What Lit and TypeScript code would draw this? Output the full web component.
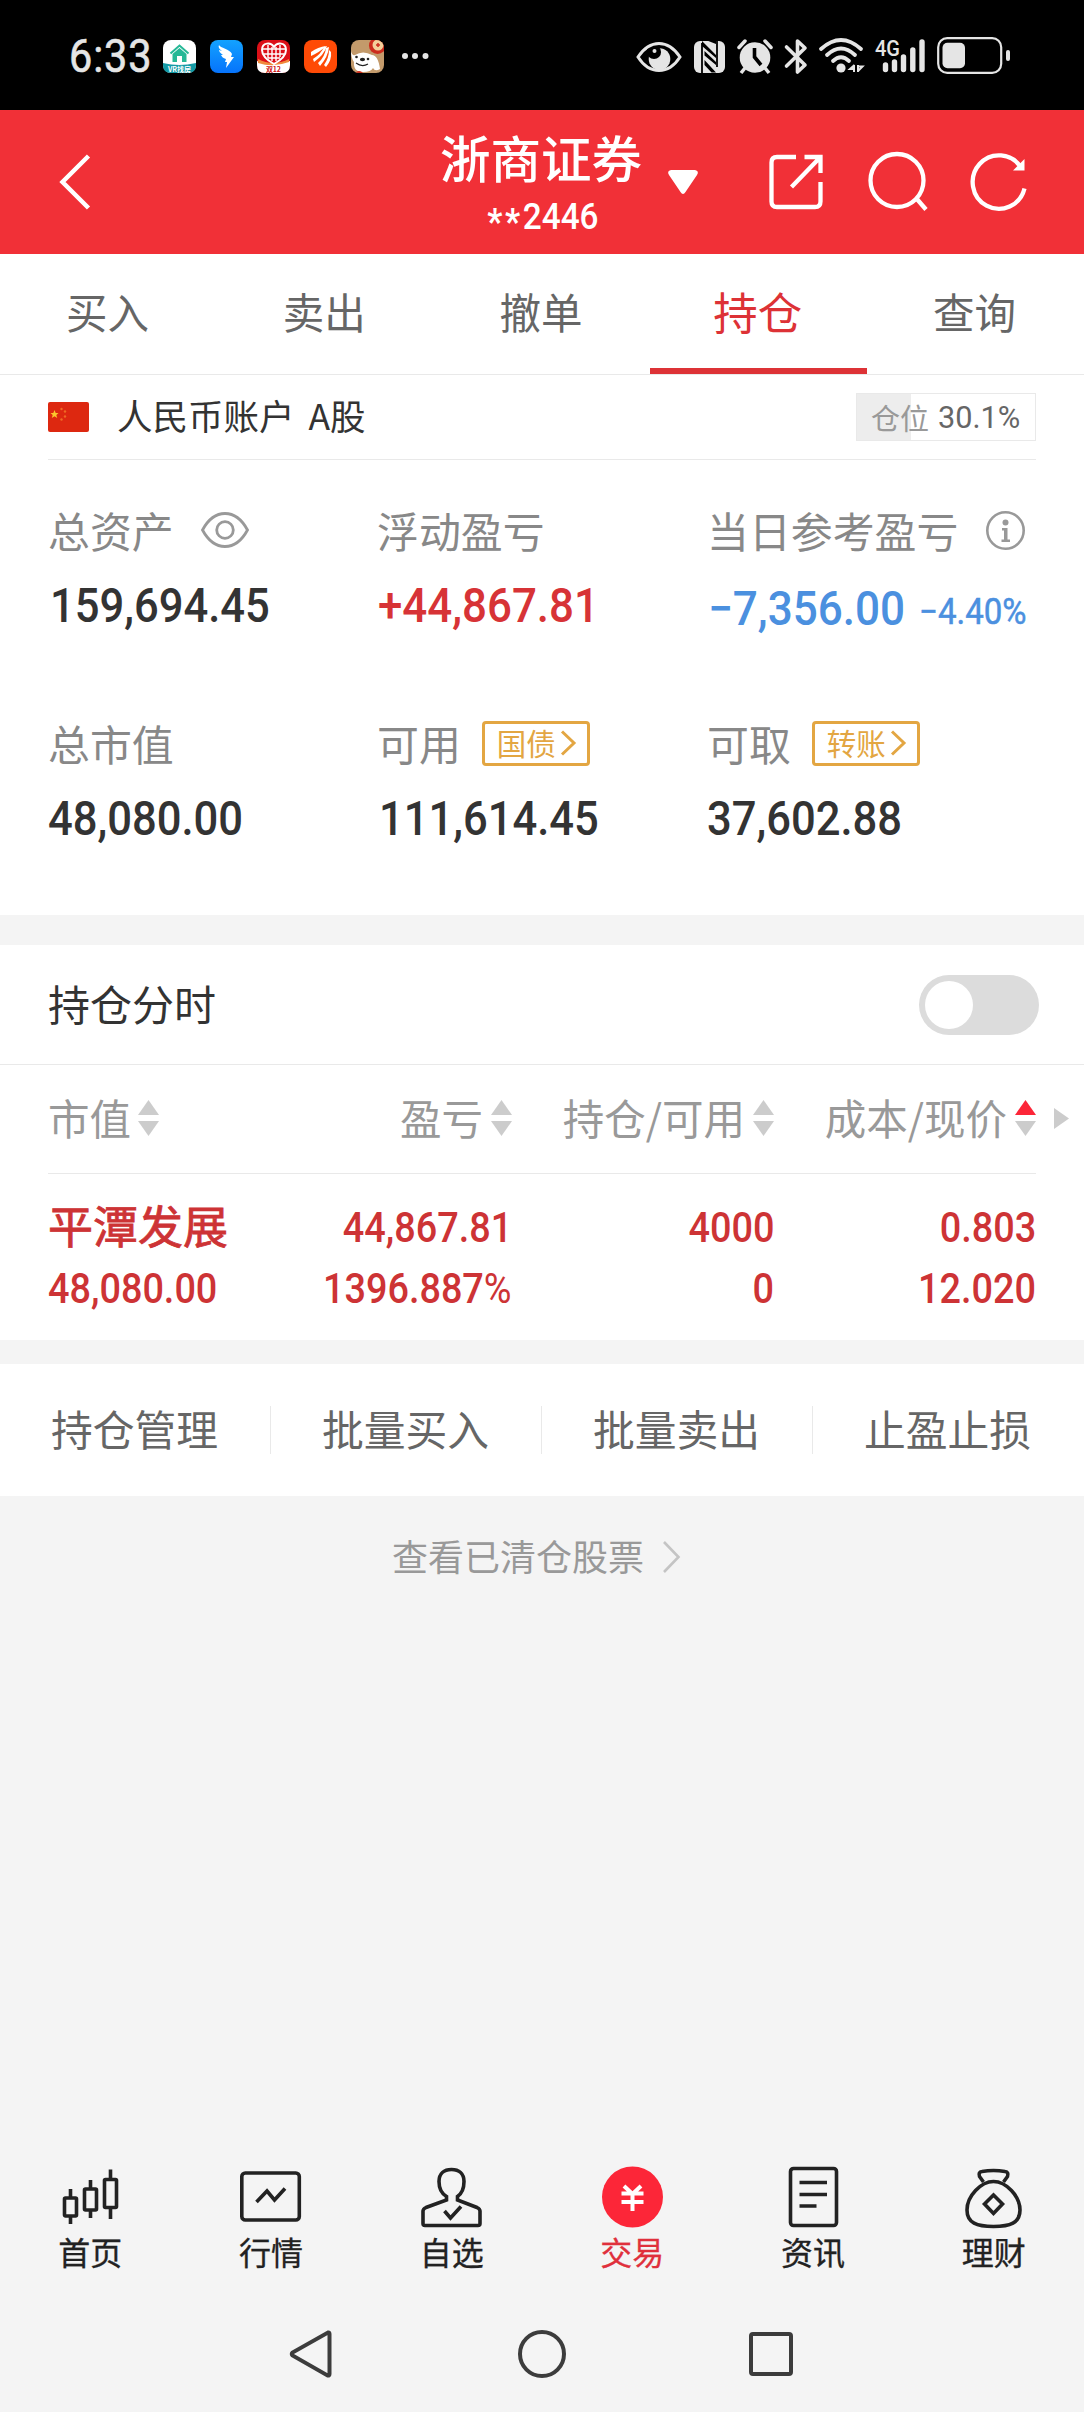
import { LitElement, html, svg, css } from "lit";
import { customElement, property } from "lit/decorators.js";
import { classMap } from "lit/directives/class-map.js";

const shared = css`
  * { box-sizing: border-box; }
  svg { display: block; flex: none; overflow: visible; }
  .num {
    display: inline-block;
    font-family: Roboto, "Liberation Sans", sans-serif;
    font-weight: 500;
    line-height: 1;
    white-space: nowrap;
    transform: scaleX(0.9);
    transform-origin: left center;
  }
  .num.end { transform-origin: right center; }
`;

@customElement("status-bar")
export class StatusBar extends LitElement {
  static styles = [shared, css`
    :host {
      display: flex; align-items: center; height: 110px; padding: 2px 74px 0 69px;
      background: #000; color: #e5e5e5; font-family: Roboto, sans-serif;
    }
    .time { width: 94px; font-size: 46px; line-height: 1; white-space: nowrap; -webkit-text-stroke: 0.6px; }
    .time span { display: inline-block; transform: scaleX(0.9); transform-origin: left center; letter-spacing: 1px; }
    .apps { display: flex; gap: 14px; align-items: center; }
    .dots { margin-left: 17px; }
    .system { display: flex; gap: 12px; margin-left: auto; }
    .cell { font: 500 22px Roboto, sans-serif; }
    .tiny { font: 700 7px "Noto Sans CJK SC", sans-serif; }
  `];

  render() {
    return html`
      <div class="time"><span>6:33</span></div>
      <div class="apps">
        <svg width="33" height="33" viewBox="0 0 33 33">
          <rect width="33" height="33" rx="8" fill="#fff"/>
          <path d="M0 23 Q16 27 33 23 V25 Q33 33 25 33 H8 Q0 33 0 25Z" fill="#149aa5"/>
          <path d="M7.500 13.500 16.500 5.500 25.500 13.500" fill="none" stroke="#26b896" stroke-width="2"/>
          <path d="M9.500 14 16.500 8 23.500 14V22H19V16H14V22H9.500Z" fill="#26b896"/>
          <text class="tiny" x="5" y="31.500" fill="#fff" textLength="23">VR找房</text>
        </svg>
        <svg width="33" height="33" viewBox="0 0 33 33">
          <defs><linearGradient id="blue" x2="0" y2="1"><stop stop-color="#13a2ff"/><stop offset="1" stop-color="#0673fb"/></linearGradient></defs>
          <rect width="33" height="33" rx="8" fill="url(#blue)"/>
          <path d="M9 5C10 8 20 9 22 14L21 17H24L16 28 17 22H15L16 19C13 18 12 17 11 15H13C10 13 9 11 9 10L12 11C9 9 8 7 9 5Z" fill="#fff"/>
        </svg>
        <svg width="33" height="33" viewBox="0 0 33 33">
          <rect width="33" height="33" rx="8" fill="#dc1018"/>
          <path d="M0 21 12 25 33 21V25Q33 33 25 33H8Q0 33 0 25Z" fill="#fff"/>
          <path d="M1 19 Q16 27 32 19V22Q16 28 1 23Z" fill="#f08a3c"/>
          <path d="M17 24C8 19 5 15 5 10 5 2 14 2 17 7 20 2 29 2 29 10 29 15 26 19 17 24Z" fill="#dc1018" stroke="#fff" stroke-width="2"/>
          <path d="M6 9H28M7 14H27M11 18H23M11 5V18M15 7V21M19 7V21M23 5V17" stroke="#fff" stroke-width="1.400"/>
          <text class="tiny" x="9" y="31.500" fill="#c11" textLength="15">双12</text>
        </svg>
        <svg width="33" height="33" viewBox="0 0 33 33">
          <rect width="33" height="33" rx="8" fill="#ff4a06"/>
          <g fill="#fff">
            <path d="M7 12Q14 7 22 6 16 12 7 16Z"/>
            <path d="M20 7 23 6Q20 15 10 22L9 19Q17 14 20 7Z"/>
            <path d="M22 8 25 7Q24 17 16 26L14 23Q21 17 22 8Z"/>
            <path d="M25 10 27 12Q28 20 22 27L20 25Q25 18 25 10Z"/>
          </g>
        </svg>
        <svg width="33" height="33" viewBox="0 0 33 33">
          <defs><clipPath id="round"><rect width="33" height="33" rx="8"/></clipPath></defs>
          <g clip-path="url(#round)">
            <rect width="33" height="33" fill="#c39a6b"/>
            <circle cx="26.500" cy="5.500" r="8.500" fill="#cc2b1c"/><circle cx="27" cy="5" r="5.500" fill="#f4cf9a"/>
            <path d="M25 5H29M27 3V7" stroke="#cc2b1c" stroke-width="1.500"/>
            <path d="M0 11Q1 16 4 15 12 10 21 15 27 15 29 29 24 32 22 28 20 32 12 32 2 32 3 22 0 18 0 11Z" fill="#fff"/>
            <ellipse cx="11.500" cy="19.500" rx="2.600" ry="1.700" fill="#222"/><circle cx="5.500" cy="17" r="1.300" fill="#222"/><circle cx="17" cy="19" r="1.300" fill="#222"/>
            <path d="M5 23Q11 27.500 17 24" fill="none" stroke="#222" stroke-width="1.200"/>
            <path d="M4 33Q8 29 12 33Z" fill="#cc2b1c"/>
          </g>
        </svg>
      </div>
      <svg class="dots" width="28" height="8" viewBox="0 0 28 8" fill="#e5e5e5">
        <circle cx="4" cy="4" r="3"/><circle cx="14" cy="4" r="3"/><circle cx="24.500" cy="4" r="3"/>
      </svg>
      <div class="system">
        <svg width="46" height="38" viewBox="0 0 46 38">
          <path d="M2 20C9 9.500 16 6.500 23 6.500S37 9.500 44 20C37 31 30 33.500 23 33.500S9 31 2 20Z" fill="none" stroke="#e5e5e5" stroke-width="3"/>
          <circle cx="23.500" cy="22" r="10.800" fill="#e5e5e5"/>
          <path d="M23 10A6 6 0 0 1 13 20L11 12Z" fill="#000"/><circle cx="18.500" cy="14" r="2" fill="#e5e5e5"/>
        </svg>
        <svg width="31" height="38" viewBox="0 0 31 38">
          <rect y="4" width="31" height="32" rx="6" fill="#e5e5e5"/>
          <path d="M8 4 22 18V21L8 9ZM10.500 14 22 25V28L10.500 18.500ZM10.500 23 22 35.500H17.500L10.500 28Z" fill="#000"/>
          <path d="M8 6V36M23 4V30" stroke="#000" stroke-width="1.800"/>
          <path d="M13 3.500H22V7Z" fill="#000"/>
        </svg>
        <svg width="36" height="38" viewBox="0 0 36 38">
          <circle cx="18" cy="20.500" r="15.300" fill="#e5e5e5"/>
          <path d="M2 10.500 8 4M34 10.500 28 4" stroke="#e5e5e5" stroke-width="3.500" stroke-linecap="round" fill="none"/>
          <path d="M8 31 4 36M28 31 32 36" stroke="#e5e5e5" stroke-width="3.500"/>
          <path d="M17.500 11V20L24 28" fill="none" stroke="#000" stroke-width="3.600"/>
        </svg>
        <svg width="22" height="38" viewBox="0 0 22 38">
          <path d="M1.500 10 20 28 12.500 35V4L20 11 1.500 29" fill="none" stroke="#e5e5e5" stroke-width="3.600" stroke-linejoin="round" stroke-linecap="round"/>
        </svg>
        <svg width="44" height="38" viewBox="0 0 44 38">
          <g fill="none" stroke="#e5e5e5" stroke-width="3.800" stroke-linecap="round">
            <path d="M2 12Q22 -6 42 12"/><path d="M8 18Q22 5 36 18"/><path d="M14 24Q22 16.500 30 24"/>
          </g>
          <circle cx="22" cy="31" r="4.600" fill="#e5e5e5"/>
          <path d="M35 28V35M35.500 28 31 32H35M39 35V28M39 34 43.500 29.500H39" fill="none" stroke="#e5e5e5" stroke-width="2"/>
        </svg>
        <svg width="50" height="38" viewBox="0 0 50 38">
          <text class="cell" x="0" y="18.500" fill="#e5e5e5" textLength="25" lengthAdjust="spacingAndGlyphs">4G</text>
          <path d="M10.500 28V32.500M19.500 25V32.500M28.500 20V32.500M37.800 13V32.500M47 5V32.500" stroke="#e5e5e5" stroke-width="5.400" stroke-linecap="round"/>
        </svg>
        <svg width="73" height="38" viewBox="0 0 73 38">
          <rect x="1.200" y="1.200" width="63" height="34.600" rx="9" fill="none" stroke="#e5e5e5" stroke-width="2.200"/>
          <rect x="5.500" y="5.700" width="22.500" height="25.500" rx="5" fill="#e5e5e5"/>
          <rect x="69" y="13" width="4" height="11" rx="2" fill="#e5e5e5"/>
        </svg>
      </div>`;
  }
}

@customElement("app-header")
export class AppHeader extends LitElement {
  static styles = [shared, css`
    :host {
      display: grid; grid-template-columns: 441px 202px 1fr; height: 144px;
      background: #f13037; color: #fff;
    }
    .back { padding: 44px 0 0 59px; }
    .title { display: flex; flex-direction: column; align-items: center; padding-top: 18px; }
    h1 { margin: 0 2px 0 0; font: 500 50.500px/56px "Noto Sans CJK SC", sans-serif; white-space: nowrap; }
    .account { height: 40px; margin: 13px 0 0 2px; display: flex; justify-content: center; }
    .account .num { font-size: 37px; line-height: 40px; transform-origin: center; transform: scaleX(0.9); }
    .stars { position: relative; top: 5px; letter-spacing: 3px; font-weight: 700; }
    .tools { display: flex; align-items: flex-start; padding-top: 42px; }
    .arrow { margin: 18px 0 0 25px; }
    .share { margin: 0 0 0 70px; }
    .search { margin-left: 43px; }
    .refresh { margin-left: 43px; }
  `];

  render() {
    return html`
      <div class="back">
        <svg width="32" height="56" viewBox="0 0 32 56"><path d="M29.500 2 3.500 28 29.500 54" fill="none" stroke="#fff" stroke-width="4.500"/></svg>
      </div>
      <div class="title">
        <h1>浙商证券</h1>
        <div class="account"><span class="num"><span class="stars">**</span>2446</span></div>
      </div>
      <div class="tools">
        <svg class="arrow" width="30" height="25" viewBox="0 0 30 25"><path d="M3 0H27Q31.500 1 29 5L17.500 22Q15 26 12.500 22L1 5Q-1.500 1 3 0Z" fill="#fff"/></svg>
        <svg class="share" width="56" height="60" viewBox="0 0 56 60" fill="none" stroke="#fff" stroke-width="4.300">
          <path d="M28 5H9Q3.500 5 3.500 10.500V49.500Q3.500 55 9 55H47Q52.500 55 52.500 49.500V30"/>
          <path d="M36.500 5H52.500V21M52.500 5 23.500 35"/>
        </svg>
        <svg class="search" width="60" height="60" viewBox="0 0 60 60" fill="none" stroke="#fff" stroke-width="4.300">
          <circle cx="30" cy="28.500" r="26.500"/><path d="M49 46 59 57.500"/>
        </svg>
        <svg class="refresh" width="60" height="60" viewBox="0 0 60 60" fill="none" stroke="#fff" stroke-width="4.300">
          <path d="M51 15.500A26.300 26.700 0 1 0 54.500 36.500"/>
          <path d="M54.500 7V18.500H43Z" fill="#fff" stroke="none"/>
        </svg>
      </div>`;
  }
}

@customElement("trade-tabs")
export class TradeTabs extends LitElement {
  @property() active = "持仓";
  private items = ["买入", "卖出", "撤单", "持仓", "查询"];
  static styles = [shared, css`
    :host {
      display: grid; grid-template-columns: repeat(5, 1fr); height: 121px;
      background: #fff; border-bottom: 1px solid #e9e9e9;
      font: 41.500px/1 "Noto Sans CJK SC", sans-serif; color: #666;
    }
    .tab { display: flex; align-items: center; justify-content: center; border-bottom: 6px solid transparent; padding: 2px 2px 0 0; }
    .on { color: #dd3236; border-color: #dd3236; font-size: 44.500px; padding-top: 0; }
  `];
  render() {
    return this.items.map((t) => html`<div class=${classMap({ tab: true, on: t === this.active })}>${t}</div>`);
  }
}

@customElement("asset-panel")
export class AssetPanel extends LitElement {
  static styles = [shared, css`
    :host { display: block; height: 540px; padding: 0 48px; background: #fff; font-family: "Noto Sans CJK SC", sans-serif; color: #888; }
    .account { display: flex; align-items: center; height: 85px; border-bottom: 1px solid #e9e9e9; font-size: 35.500px; line-height: 1; color: #333; }
    .name { margin: -4px 0 0 28px; white-space: nowrap; word-spacing: 6px; }
    .position {
      display: flex; align-items: center; width: 180px; height: 48px; margin-left: auto; padding-left: 14px;
      border: 1px solid #e9e9e9; background: linear-gradient(90deg, #ededed 30.1%, #fff 30.1%);
      font-size: 29px; color: #999;
    }
    .position .num { margin-left: 9px; font-size: 31px; font-weight: 400; color: #666; transform: scaleX(0.99); }
    .grid { display: grid; grid-template-columns: 329px 330px 1fr; row-gap: 77px; padding-top: 40px; }
    .label { display: flex; align-items: center; height: 60px; font-size: 41.900px; line-height: 1; white-space: nowrap; }
    .value { display: flex; align-items: center; height: 60px; margin-top: 16px; color: #333; }
    .value .num { font-size: 48px; transform: scaleX(0.907); }
    .value .num.one { margin-left: 2px; }
    .up { color: #d73336; }
    .value.up .num { margin-left: 1px; transform: scaleX(0.914); }
    .down { color: #4b90df; padding-top: 5px; }
    .value.down .num { margin-left: 1px; transform: scaleX(0.918); }
    .value.down .rate { font-size: 36px; font-weight: 400; margin-left: -4px; padding-top: 6px; -webkit-text-stroke: 0.5px; }
    .eye { margin-left: 27px; }
    .info { margin-left: 28px; }
    .tag {
      display: flex; align-items: center; width: 108px; height: 45px; margin-left: 21px; padding-left: 12px;
      border: 3px solid #e3a642; border-radius: 4px; color: #e3a642; font-size: 29.500px; line-height: 1;
    }
    .tag svg { margin-left: 5px; }
  `];

  private tag(text: string) {
    return html`<span class="tag">${text}<svg width="15" height="26" viewBox="0 0 15 26"><path d="M1 1.500 13 13 1 24.500" fill="none" stroke="#e3a642" stroke-width="3"/></svg></span>`;
  }

  render() {
    return html`
      <div class="account">
        <svg width="41" height="30" viewBox="0 0 41 30">
          <rect width="41" height="30" rx="2" fill="#dd2810"/>
          <path d="M6.500 8 7.700 11H10.500L8.300 13 9.200 16 6.500 14.200 3.800 16 4.700 13 2.500 11H5.300Z" fill="#fbc72c"/>
          <g fill="#ee6a24"><circle cx="13.500" cy="7" r="1.200"/><circle cx="17" cy="9.500" r="1.200"/><circle cx="17" cy="14.500" r="1.200"/><circle cx="13.500" cy="17.500" r="1.200"/></g>
        </svg>
        <span class="name">人民币账户 A股</span>
        <div class="position">仓位<span class="num">30.1%</span></div>
      </div>
      <div class="grid">
        <div>
          <div class="label">总资产
            <svg class="eye" width="48" height="36" viewBox="0 0 48 36" fill="none" stroke="#999" stroke-width="2.800">
              <path d="M1.500 18C8 6 15 1.500 24 1.500S40 6 46.500 18C40 30 33 34.500 24 34.500S8 30 1.500 18Z"/><circle cx="24" cy="18" r="8.300"/>
            </svg>
          </div>
          <div class="value"><span class="num one">159,694.45</span></div>
        </div>
        <div>
          <div class="label">浮动盈亏</div>
          <div class="value up"><span class="num">+44,867.81</span></div>
        </div>
        <div>
          <div class="label">当日参考盈亏
            <svg class="info" width="39" height="39" viewBox="0 0 39 39" fill="#999">
              <circle cx="19.500" cy="19.500" r="18.200" fill="none" stroke="#999" stroke-width="2.600"/>
              <circle cx="19.500" cy="11.500" r="3"/><path d="M16 17H21.500V28.500H24V31H15.500V28.500H18V19.500H16Z"/>
            </svg>
          </div>
          <div class="value down">
            <span class="num">−7,356.00</span><span class="num rate">−4.40%</span>
          </div>
        </div>
        <div>
          <div class="label">总市值</div>
          <div class="value"><span class="num">48,080.00</span></div>
        </div>
        <div>
          <div class="label">可用${this.tag("国债")}</div>
          <div class="value"><span class="num one">111,614.45</span></div>
        </div>
        <div>
          <div class="label">可取${this.tag("转账")}</div>
          <div class="value"><span class="num">37,602.88</span></div>
        </div>
      </div>`;
  }
}

@customElement("holdings-panel")
export class HoldingsPanel extends LitElement {
  static styles = [shared, css`
    :host { display: block; background: #fff; font-family: "Noto Sans CJK SC", sans-serif; }
    .switch-row { display: flex; align-items: center; justify-content: space-between; height: 120px; padding: 0 45px 0 48px; border-bottom: 1px solid #e9e9e9; font-size: 42px; line-height: 1; color: #333; }
    .switch-row span { margin-top: -3px; }
    .toggle { width: 120px; height: 60px; padding: 6px; border-radius: 30px; background: #dcdcdc; }
    .knob { width: 48px; height: 48px; border-radius: 50%; background: #fff; }
    .cols { display: grid; grid-template-columns: 204px 260px 262px 262px 1fr; padding-left: 48px; }
    .head { position: relative; height: 109px; padding-bottom: 3px; align-items: center; font-size: 41.500px; line-height: 1; color: #999; }
    .head::after { content: ""; position: absolute; left: 48px; right: 48px; bottom: 0; height: 1px; background: #e9e9e9; }
    .h { display: flex; align-items: center; justify-content: flex-end; gap: 8px; white-space: nowrap; }
    .h.first { justify-content: flex-start; gap: 7px; }
    .more { margin-left: 18px; }
    .row { height: 166px; padding-top: 22px; color: #cd3335; align-content: start; }
    .c { display: flex; flex-direction: column; align-items: flex-end; }
    .c.first { align-items: flex-start; }
    .c .num { margin-top: 1px; height: 60px; line-height: 62px; font-size: 42px; }
    .stock { height: 61px; line-height: 58px; font-size: 45px; white-space: nowrap; -webkit-text-stroke: 0.8px; }
    .num { transform: scaleX(0.9); }
    .pct { font-weight: 400; }
  `];

  private sorter(label: string, opts: { first?: boolean; asc?: boolean } = {}) {
    return html`<div class=${classMap({ h: true, first: !!opts.first })}>${label}
      <svg width="21" height="36" viewBox="0 0 21 36">
        <path d="M10.500 0 21 15H0Z" fill=${opts.asc ? "#fc2638" : "#ccc"}/><path d="M10.500 36 21 21H0Z" fill="#ccc"/>
      </svg></div>`;
  }

  render() {
    return html`
      <div class="switch-row"><span>持仓分时</span><div class="toggle"><div class="knob"></div></div></div>
      <div class="cols head">
        ${this.sorter("市值", { first: true })}
        ${this.sorter("盈亏")}
        ${this.sorter("持仓/可用")}
        ${this.sorter("成本/现价", { asc: true })}
        <svg class="more" width="15" height="21" viewBox="0 0 15 21"><path d="M0 0 15 10.500 0 21Z" fill="#ccc"/></svg>
      </div>
      <div class="cols row">
        <div class="c first"><span class="stock">平潭发展</span><span class="num">48,080.00</span></div>
        <div class="c"><span class="num end">44,867.81</span><span class="num end">1396.887<span class="pct">%</span></span></div>
        <div class="c"><span class="num end">4000</span><span class="num end">0</span></div>
        <div class="c"><span class="num end">0.803</span><span class="num end">12.020</span></div>
      </div>`;
  }
}

@customElement("action-row")
export class ActionRow extends LitElement {
  static styles = [shared, css`
    :host { display: grid; grid-template-columns: repeat(4, 1fr); align-items: center; height: 132px; background: #fff; font: 41.800px/48px "Noto Sans CJK SC", sans-serif; color: #666; }
    .item { height: 48px; text-align: center; border-right: 1px solid #e9e9e9; white-space: nowrap; }
    .item:last-child { border-color: transparent; }
    .item span { display: block; margin: -2px 1px 0 0; }
  `];
  render() {
    return ["持仓管理", "批量买入", "批量卖出", "止盈止损"].map((t) => html`<div class="item"><span>${t}</span></div>`);
  }
}

@customElement("bottom-nav")
export class BottomNav extends LitElement {
  static styles = [shared, css`
    :host { display: grid; grid-template-columns: repeat(6, 1fr); font: 32px/40px "Noto Sans CJK SC", sans-serif; color: #222; }
    .item { display: flex; flex-direction: column; align-items: center; gap: 3px; -webkit-text-stroke: 0.3px; }
    .on { color: #e0303c; }
  `];

  private items = [
    { label: "首页", icon: svg`
      <path d="M10.500 22V32M10.500 50V57M30.500 13V23M30.500 43V51M50.500 2.500V12M50.500 40V52"/>
      <rect x="4.500" y="31" width="12" height="18" rx="1"/><rect x="24.500" y="22" width="12" height="21" rx="1"/><rect x="44.500" y="12.500" width="12" height="28" rx="1"/>` },
    { label: "行情", icon: svg`<rect x="1.800" y="6" width="57.500" height="47" rx="3.500"/><path d="M16.500 35 27 24 34.500 33 45 21.500"/>` },
    { label: "自选", icon: svg`
      <path d="M25.500 29.500V33L5 40.500Q2 42 2 44V56.500Q2 58.500 4 58.500H57Q59 58.500 59 56.500V44Q59 42 56 40.500L36.500 33V29.500Q43 25 43 14.500C43 6.500 38 2.500 30.500 2.500S18 6.500 18 14.500Q18 25 25.500 29.500Z"/>
      <path d="M23.500 44 29.500 51 40 39.500"/>` },
    { label: "交易", icon: svg`
      <circle cx="30.500" cy="30" r="30.500" fill="#fc2638" stroke="none"/>
      <path d="M22 19 30.500 27 39 19M19.500 26.500H41.500M19.500 35H41.500M30.500 26V44" stroke="#fff" stroke-width="4"/>` },
    { label: "资讯", icon: svg`
      <rect x="8.500" y="1.500" width="46" height="57" rx="3"/>
      <path d="M17.500 15.500H45M17.500 27.500H45M17.500 39H34.500"/>` },
    { label: "理财", icon: svg`
      <path d="M20.500 15 16.500 9.500Q15 5 19 4.500 30.500 2.500 42 4.500 46 5 44.500 9.500L40.500 15"/>
      <path d="M30.500 14.500C43 14.500 57 29 57 43 57 56 47 59.500 30.500 59.500S4 56 4 43C4 29 18 14.500 30.500 14.500Z"/>
      <path d="M30.500 28 39.500 37 30.500 46.500 21.500 37Z"/>` },
  ];

  render() {
    return this.items.map((i) => html`
      <div class=${classMap({ item: true, on: i.label === "交易" })}>
        <svg width="61" height="61" viewBox="0 0 61 61" fill="none" stroke="#222" stroke-width="3.600">${i.icon}</svg>
        <span>${i.label}</span>
      </div>`);
  }
}

@customElement("app-root")
export class AppRoot extends LitElement {
  static styles = [shared, css`
    :host { display: flex; flex-direction: column; width: 1084px; height: 2412px; background: #f4f4f4; overflow: hidden; }
    holdings-panel { margin-top: 30px; }
    action-row { margin-top: 24px; }
    .cleared { display: flex; align-items: center; justify-content: center; gap: 19px; margin-top: 37px; height: 48px; padding-right: 12px; font: 36px/1 "Noto Sans CJK SC", sans-serif; color: #999; white-space: nowrap; }
    .cleared span { margin-top: -4px; }
    .spacer { flex: 1; }
    .system-nav { display: flex; justify-content: center; align-items: center; height: 116px; margin-top: 25px; padding-right: 1px; fill: none; stroke: #3c3c3c; stroke-width: 4; }
    .system-nav .home { margin: 0 183px 0 187px; }
  `];

  render() {
    return html`
      <status-bar></status-bar>
      <app-header></app-header>
      <trade-tabs></trade-tabs>
      <asset-panel></asset-panel>
      <holdings-panel></holdings-panel>
      <action-row></action-row>
      <div class="cleared"><span>查看已清仓股票</span>
        <svg width="17" height="32" viewBox="0 0 17 32"><path d="M1 1 15.500 16 1 31" fill="none" stroke="#c4c4c4" stroke-width="2.600"/></svg>
      </div>
      <div class="spacer"></div>
      <bottom-nav></bottom-nav>
      <div class="system-nav">
        <svg width="41" height="48" viewBox="0 0 41 48"><path d="M38 2.500Q39.500 2 39.500 4V44Q39.500 46 37.500 45.500L2.500 25.500Q1 24 2.500 22.500Z"/></svg>
        <svg class="home" width="48" height="48" viewBox="0 0 48 48"><circle cx="24" cy="24" r="22"/></svg>
        <svg width="44" height="44" viewBox="0 0 44 44"><rect x="2" y="2" width="40" height="40" rx="2"/></svg>
      </div>`;
  }
}
